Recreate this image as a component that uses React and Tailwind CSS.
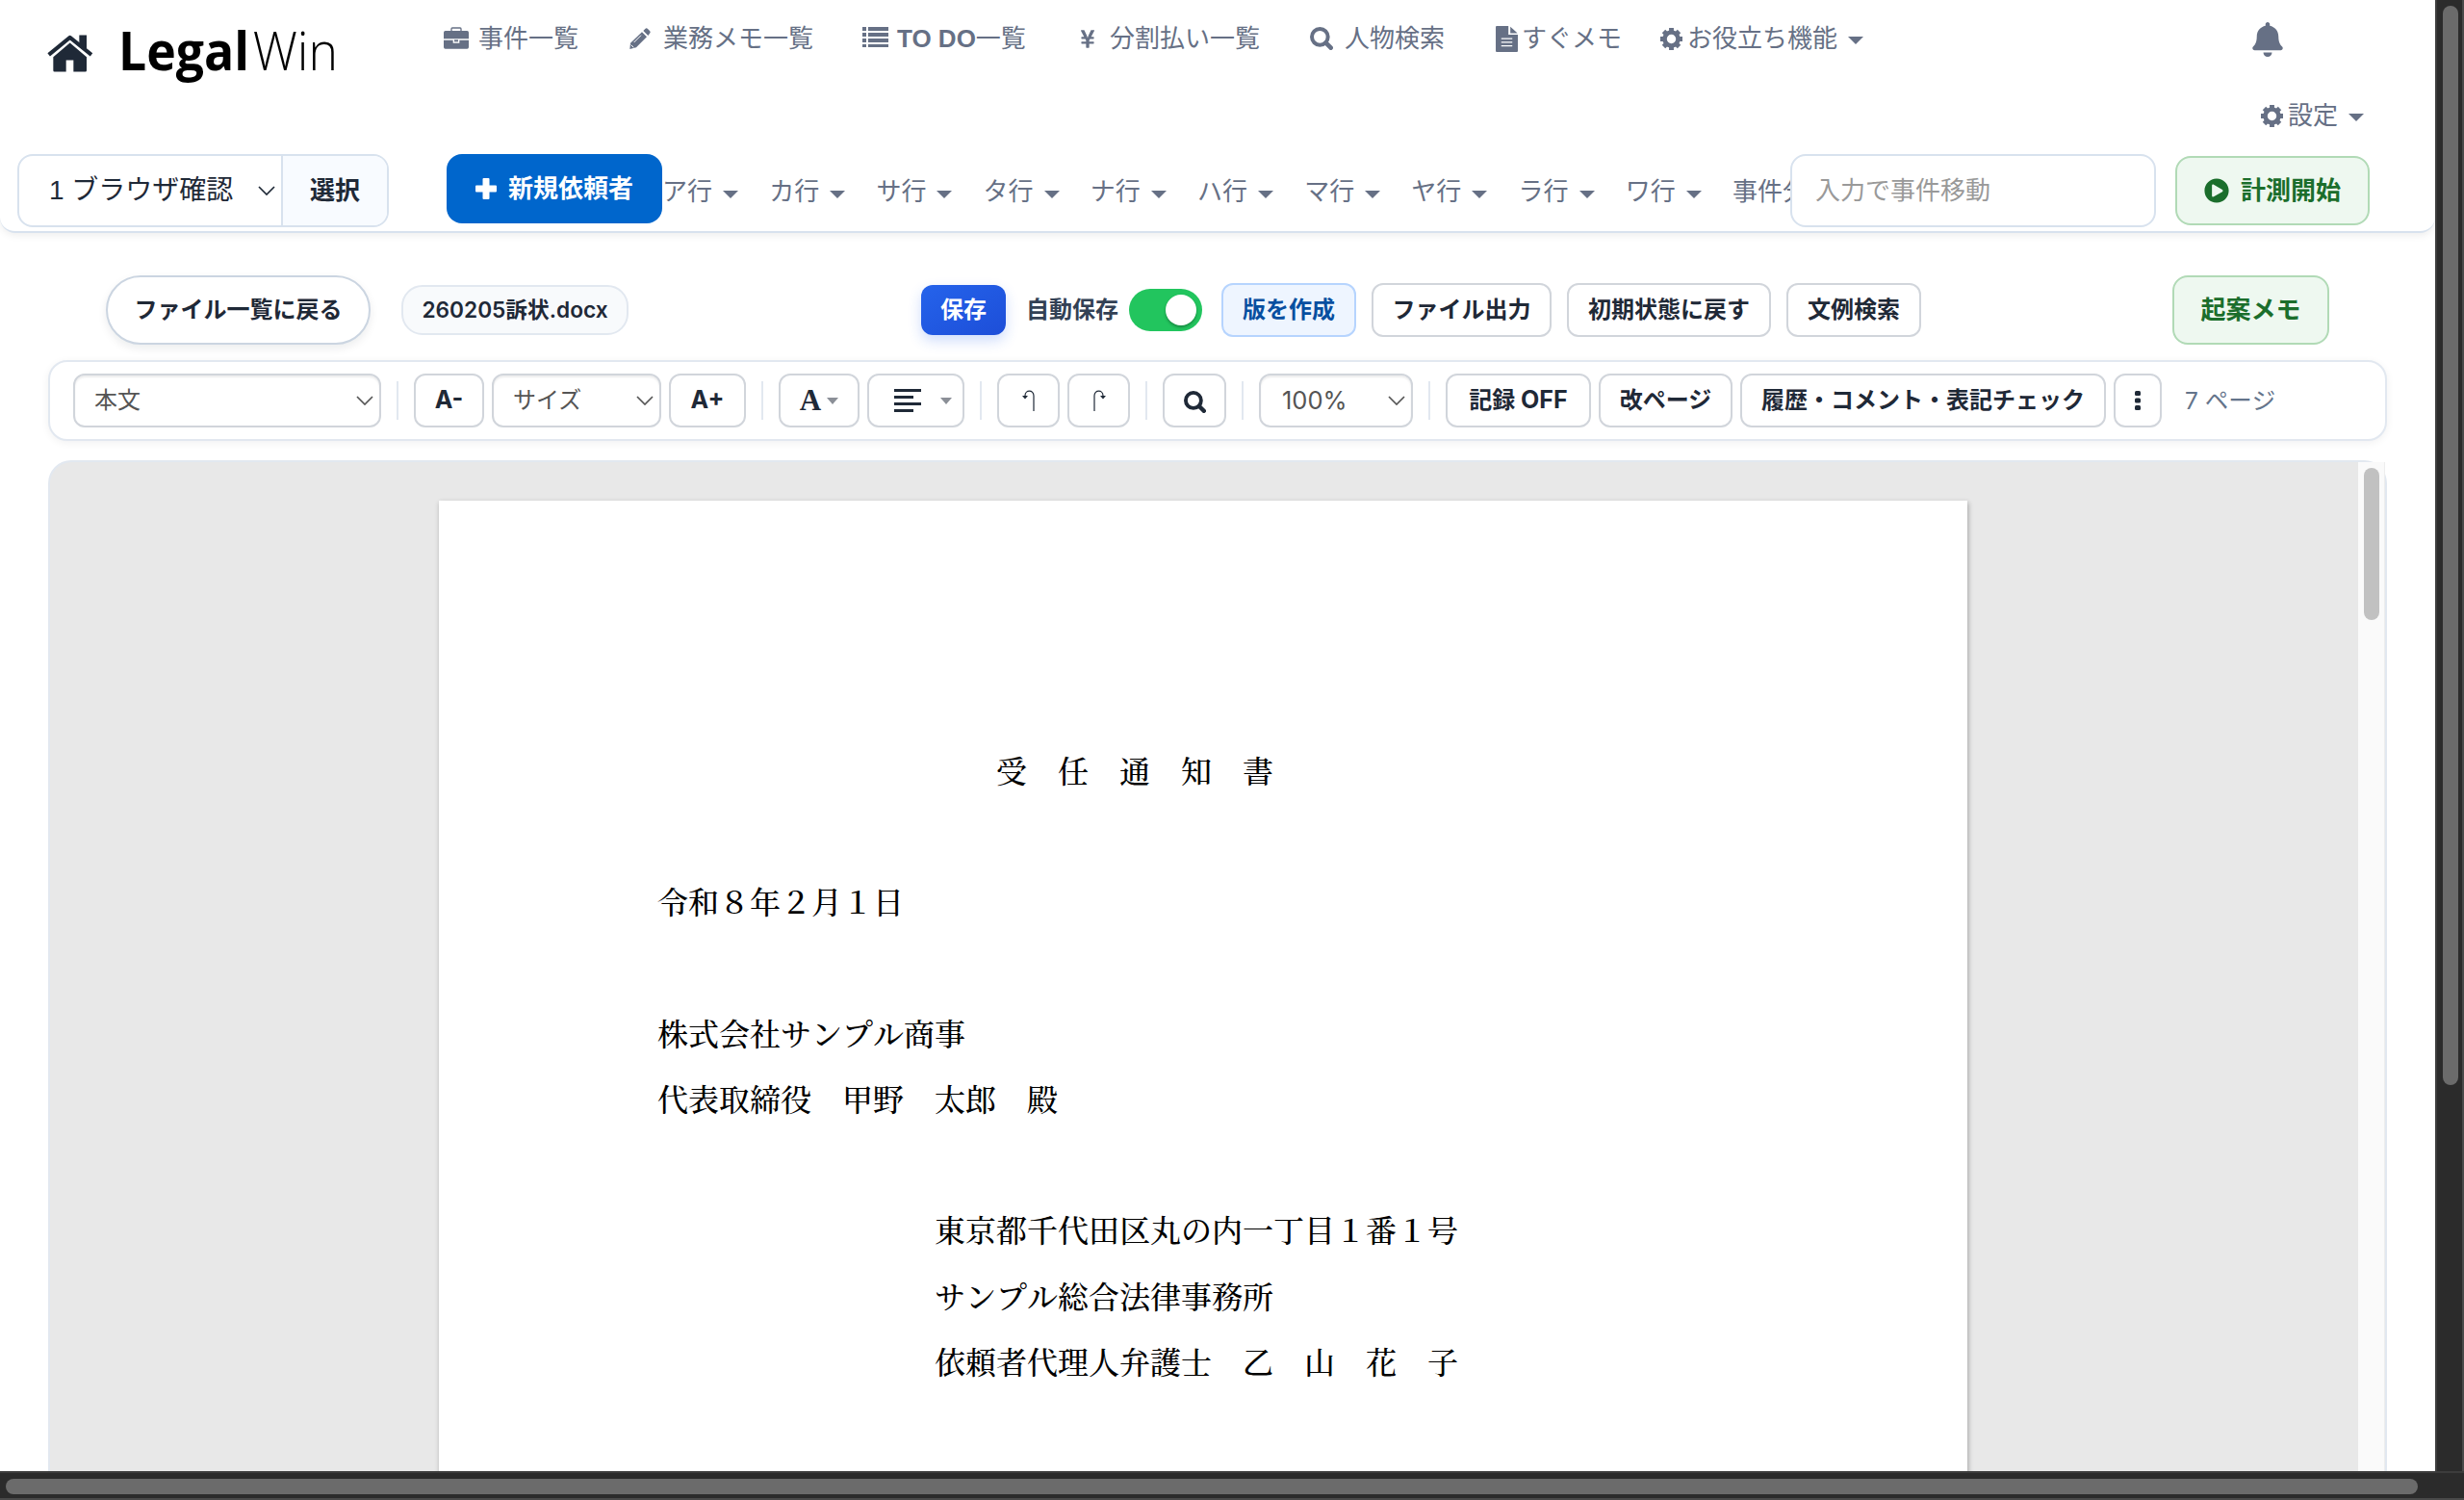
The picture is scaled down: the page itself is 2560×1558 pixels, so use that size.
import { FaBell, FaPlayCircle, FaYenSign } from 'react-icons/fa';

const kanaRows = ['ア行', 'カ行', 'サ行', 'タ行', 'ナ行', 'ハ行', 'マ行', 'ヤ行', 'ラ行', 'ワ行'];

const documentLines = [
    '　　　　　　　　　　　受　任　通　知　書',
    '',
    '令和８年２月１日',
    '',
    '株式会社サンプル商事',
    '代表取締役　甲野　太郎　殿',
    '',
    '　　　　　　　　　東京都千代田区丸の内一丁目１番１号',
    '　　　　　　　　　サンプル総合法律事務所',
    '　　　　　　　　　依頼者代理人弁護士　乙　山　花　子',
];

const HomeIcon = ({ className }) => (
    <svg viewBox="0 0 144 116" className={className} fill="currentColor">
        <path d="M5 62L71 8l67 54" fill="none" stroke="currentColor" strokeWidth="12" strokeLinejoin="round" />
        <path d="M100 1h23v46L100 28z" />
        <path d="M19 69l52-44 52 44v42q0 4-4 4H82V79H59v36H23q-4 0-4-4z" />
    </svg>
);

const BriefcaseIcon = ({ className }) => (
    <svg viewBox="0 0 78 67" className={className} fill="currentColor">
        <path d="M24 12V5q0-3 3-3h24q3 0 3 3v7" fill="none" stroke="currentColor" strokeWidth="4" />
        <path d="M5 11h68q5 0 5 5v20H0V16q0-5 5-5zM0 40h29v9h20v-9h29v22q0 5-5 5H5q-5 0-5-5z" />
        <path d="M33 39h12v6H33z" />
    </svg>
);

const PencilIcon = ({ className }) => (
    <svg viewBox="0 0 66 66" className={className} fill="currentColor">
        <path d="M43 9l6-6q4-4 8 0l6 6q4 4 0 8l-5 7z" />
        <path d="M39 13l15 15-33 33-20 5 2-19z" />
        <path d="M36 23L14 45M5 53l8 8" fill="none" stroke="white" strokeWidth="3" />
    </svg>
);

const ListIcon = ({ className }) => (
    <svg viewBox="0 0 27 22" className={className} fill="currentColor">
        <path d="M0 0h4v4H0zM6 0h21v4H6zM0 6h4v4H0zM6 6h21v4H6zM0 12h4v4H0zM6 12h21v4H6zM0 18h4v3H0zM6 18h21v3H6z" />
    </svg>
);

const SearchIcon = ({ className }) => (
    <svg viewBox="0 0 72 72" className={className} fill="none" stroke="currentColor">
        <circle cx="31" cy="31" r="25" strokeWidth="12" />
        <path d="M50 50l15 15" strokeWidth="14" strokeLinecap="round" />
    </svg>
);

const FileIcon = ({ className }) => (
    <svg viewBox="0 0 68 80" className={className} fill="currentColor">
        <path
            fillRule="evenodd"
            d="M3 0h36v27h29v50q0 3-3 3H3q-3 0-3-3V3q0-3 3-3zM17 37v4h34v-4zM17 48v4h34v-4zM17 59v4h34v-4z"
        />
        <path d="M45 2l22 20H45z" />
    </svg>
);

const GearIcon = ({ className }) => (
    <svg viewBox="-33 -33 66 66" className={className} fill="none" stroke="currentColor">
        <circle r="20" strokeWidth="13" />
        <path
            d="M0-33V-22M0 33V22M-33 0H-22M33 0H22M-23-23l8 8M23 23l-8-8M23-23l-8 8M-23 23l8-8"
            strokeWidth="14"
        />
    </svg>
);

const PlusIcon = ({ className }) => (
    <svg viewBox="0 0 22 22" className={className} fill="currentColor">
        <path d="M8.500 0h5q1 0 1 1v6.500h6.500q1 0 1 1v5q0 1-1 1h-6.500V21q0 1-1 1h-5q-1 0-1-1v-6.500H1q-1 0-1-1v-5q0-1 1-1h6.500V1q0-1 1-1z" />
    </svg>
);

const Caret = ({ className = 'w-4 h-2' }) => (
    <svg viewBox="0 0 16 8" preserveAspectRatio="none" className={`shrink-0 ${className}`} fill="currentColor">
        <path d="M0 0h16L8 8z" />
    </svg>
);

const Chevron = () => (
    <svg viewBox="0 0 18 10" className="w-[18px] h-[10px] shrink-0" fill="none" stroke="currentColor" strokeWidth="1.7">
        <path d="M1 1l8 8 8-8" />
    </svg>
);

const NavItem = ({ icon, label, className = '' }) => (
    <a className={`flex items-center shrink-0 ${className}`}>
        {icon}
        <span>{label}</span>
    </a>
);

const Separator = () => <div className="w-0.5 h-10 mx-2 bg-[#e2e8f0] shrink-0" />;

const ToolButton = ({ children, className = '', tone = 'border-[#d1d5db] bg-white text-[#1f2937]' }) => (
    <button
        className={`h-14 shrink-0 flex items-center justify-center rounded-xl border-2 font-bold text-2xl ${tone} ${className}`}
    >
        {children}
    </button>
);

const ToolSelect = ({ label, className = '' }) => (
    <div
        className={`h-14 shrink-0 flex items-center justify-between rounded-xl border-2 border-[#d1d5db] bg-white text-2xl text-[#555] pl-5 pr-1.5 shadow-[inset_0_2px_2px_rgba(0,0,0,0.07)] ${className}`}
    >
        {label}
        <Chevron />
    </div>
);

const Header = () => (
    <header className="h-[242px] shrink-0 bg-white border-b-2 border-[#d8e2ee] rounded-b-2xl shadow-[0_2px_8px_rgba(0,0,0,0.08)] text-[26px] leading-none text-[#667085]">
        <div className="flex h-20">
            <div className="w-[461px] shrink-0 flex items-start pl-[49px] pt-5 text-[#1f2937]">
                <HomeIcon className="w-12 h-[39px] mt-4 shrink-0" />
                <div className="ml-[26px] flex h-[62px] items-center text-black text-[55px] font-['Open_Sans'] origin-left scale-x-[0.94]">
                    <span className="font-bold">Legal</span>
                    <span className="font-light ml-1">Win</span>
                </div>
            </div>
            <nav className="flex items-center w-[1879px] shrink-0">
                <NavItem
                    className="w-[192px]"
                    icon={<BriefcaseIcon className="mr-2.5 mb-0.5 w-[26px] h-[23px]" />}
                    label="事件一覧"
                />
                <NavItem
                    className="w-[243px]"
                    icon={<PencilIcon className="ml-px mr-[13px] w-[22px] h-[22px]" />}
                    label="業務メモ一覧"
                />
                <NavItem
                    className="w-[226px]"
                    icon={<ListIcon className="mr-[9px] mb-0.5 w-[27px] h-[22px]" />}
                    label={
                        <>
                            <b>TO DO</b>一覧
                        </>
                    }
                />
                <NavItem
                    className="w-[239px]"
                    icon={<FaYenSign className="mr-[15px] w-4 h-[21px]" />}
                    label="分割払い一覧"
                />
                <NavItem className="w-[193px]" icon={<SearchIcon className="mr-3 w-6 h-6" />} label="人物検索" />
                <NavItem className="w-[170px]" icon={<FileIcon className="mr-1 w-[23px] h-[27px]" />} label="すぐメモ" />
                <NavItem icon={<GearIcon className="ml-px mr-[5px] w-[23px] h-[23px]" />} label="お役立ち機能" />
                <Caret className="w-4 h-2 ml-[11px] mt-1" />
            </nav>
            <FaBell className="w-[32px] h-[36px] mt-[23px]" />
        </div>
        <div className="flex h-20 items-center justify-end pr-[74px]">
            <GearIcon className="w-[23px] h-[23px] mr-[5px]" />
            設定
            <Caret className="w-4 h-2 ml-[11px] mt-1" />
        </div>
        <div className="flex items-start h-[76px]">
            <div className="ml-[18px] w-[386px] h-[76px] shrink-0 flex rounded-2xl border-2 border-[#d8e2ee] overflow-hidden text-[#1f2937]">
                <div className="w-[274px] flex items-center justify-between pl-[31px] pr-1.5 text-[28px] border-r-2 border-[#d8e2ee] [font-kerning:none]">
                    <span>1 ブラウザ確認</span>
                    <Chevron />
                </div>
                <div className="flex-1 flex items-center justify-center bg-[#f8fbff] font-bold">選択</div>
            </div>
            <button className="ml-[60px] w-[224px] h-[72px] shrink-0 flex items-center justify-center gap-3 rounded-2xl bg-[#0066cc] text-white font-bold">
                <PlusIcon className="w-[22px] h-[22px]" />
                新規依頼者
            </button>
            <div className="flex w-[1172px] shrink-0 h-[78px] items-center overflow-hidden whitespace-nowrap">
                {kanaRows.map((row) => (
                    <div key={row} className="w-[111.2px] shrink-0 flex items-center">
                        {row}
                        <Caret className="w-4 h-2 ml-[11px] mt-1.5" />
                    </div>
                ))}
                <span>事件分</span>
            </div>
            <div className="w-[380px] h-[76px] shrink-0 flex items-center rounded-2xl border-2 border-[#d8e2ee] bg-white pl-6 text-[#999]">
                入力で事件移動
            </div>
            <button className="ml-5 mt-0.5 w-[202px] h-[72px] shrink-0 flex items-center justify-center gap-3 rounded-2xl border-2 border-[#b1dab6] bg-[#eef8f0] text-[#1b6e2c] font-bold">
                <FaPlayCircle className="w-[26px] h-[26px]" />
                計測開始
            </button>
        </div>
    </header>
);

const ActionBar = () => (
    <div className="flex items-center h-[72px] mt-11 shrink-0 text-2xl leading-none text-[#1f2937] font-bold">
        <button className="ml-[110px] w-[275px] h-[72px] shrink-0 rounded-full border-2 border-[#cbd5e1] bg-white shadow-[0_4px_10px_rgba(15,23,42,0.08)]">
            ファイル一覧に戻る
        </button>
        <div className="ml-8 w-[236px] h-[52px] shrink-0 flex items-center justify-center rounded-[22px] border-2 border-[#e2e8f0] bg-[#f8fafc] text-[22.700px] font-semibold font-['Inter','Noto_Sans_CJK_JP',sans-serif]">
            260205訴状.docx
        </div>
        <button className="ml-[304px] w-[88px] h-[52px] shrink-0 rounded-xl bg-linear-to-br from-[#2563eb] to-[#1d4ed8] text-white shadow-[0_6px_14px_rgba(37,99,235,0.22)]">
            保存
        </button>
        <span className="ml-[21px] text-[#334155]">自動保存</span>
        <div className="ml-[11px] w-[76px] h-11 shrink-0 flex items-center justify-end rounded-full bg-[#22c55e] pr-1.5">
            <div className="w-8 h-8 rounded-full bg-white shadow-[0_2px_3px_rgba(0,0,0,0.3)]" />
        </div>
        <ToolButton className="ml-5 w-[140px]" tone="border-[#b6d4fe] bg-[#eef5ff] text-[#084fa0]">
            版を作成
        </ToolButton>
        <ToolButton className="ml-4 w-[187px]">ファイル出力</ToolButton>
        <ToolButton className="ml-4 w-[212px]">初期状態に戻す</ToolButton>
        <ToolButton className="ml-4 w-[140px]">文例検索</ToolButton>
        <button className="ml-[261px] w-[163px] h-[72px] shrink-0 rounded-2xl border-2 border-[#b1dab6] bg-[#eef8f0] text-[26px] text-[#1b6e2c]">
            起案メモ
        </button>
    </div>
);

const Toolbar = () => (
    <div className="mt-4 ml-[50px] w-[2430px] h-[84px] shrink-0 flex items-center gap-2 rounded-[20px] border-2 border-[#e2e8f0] bg-white pl-6 leading-none shadow-[0_2px_8px_rgba(15,23,42,0.06)] font-['Inter','Noto_Sans_CJK_JP',sans-serif]">
        <ToolSelect label="本文" className="w-80" />
        <Separator />
        <ToolButton className="w-[73px]">
            <span className="text-[25px]">A-</span>
        </ToolButton>
        <ToolSelect label="サイズ" className="w-44" />
        <ToolButton className="w-20">
            <span className="text-[25px]">A+</span>
        </ToolButton>
        <Separator />
        <ToolButton className="w-[84px] gap-1.5">
            <span className="font-['Liberation_Serif'] text-[31px]">A</span>
            <Caret className="w-3 h-[7px] text-[#8b8f97]" />
        </ToolButton>
        <ToolButton className="w-[101px] gap-5 pl-3.5">
            <svg viewBox="0 0 28 24" className="w-7 h-6" fill="currentColor">
                <path d="M0 0h28v3H0zM0 7h20v3H0zM0 14h28v3H0zM0 21h20v3H0z" />
            </svg>
            <Caret className="w-3 h-[7px] text-[#8b8f97]" />
        </ToolButton>
        <Separator />
        <ToolButton className="w-[65px]">
            <svg viewBox="0 0 14 22" className="w-[14px] h-[22px]" fill="none" stroke="currentColor" strokeWidth="1.2">
                <path d="M12 22V6C12 -0.500 3 -0.500 3 6" />
                <path d="M0 6h6L3 9.500z" fill="currentColor" stroke="none" />
            </svg>
        </ToolButton>
        <ToolButton className="w-[65px]">
            <svg viewBox="0 0 14 22" className="w-[14px] h-[22px]" fill="none" stroke="currentColor" strokeWidth="1.2">
                <path d="M2 22V6C2 -0.500 11 -0.500 11 6" />
                <path d="M8 6h6L11 9.500z" fill="currentColor" stroke="none" />
            </svg>
        </ToolButton>
        <Separator />
        <ToolButton className="w-[66px]">
            <SearchIcon className="w-[23px] h-[23px] mt-0.5" />
        </ToolButton>
        <Separator />
        <ToolSelect label={<span className="ml-0.5 text-[25.500px]">100%</span>} className="w-40" />
        <Separator />
        <ToolButton className="w-[151px]">
            <span>
                記録 <span className="text-[25px]">OFF</span>
            </span>
        </ToolButton>
        <ToolButton className="w-[139px]">改ページ</ToolButton>
        <ToolButton className="w-[380px]">履歴・コメント・表記チェック</ToolButton>
        <ToolButton className="w-[50px]">
            <svg viewBox="0 0 6 20" className="w-1.5 h-5" fill="currentColor">
                <rect width="6" height="5" rx="1.5" />
                <rect y="7.500" width="6" height="5" rx="1.5" />
                <rect y="15" width="6" height="5" rx="1.5" />
            </svg>
        </ToolButton>
        <span className="ml-4 text-[24.500px] text-[#64748b] [font-kerning:none]">7 ページ</span>
    </div>
);

const Editor = () => (
    <div className="mt-5 ml-[50px] w-[2430px] flex-1 min-h-0 flex rounded-t-3xl border-2 border-b-0 border-[#e2e8f0] bg-[#e8e8e8]">
        <div className="flex-1 overflow-hidden">
            <div className="mt-10 ml-[404px] w-[1588px] h-[1100px] bg-white pt-[245px] pl-[227px] shadow-[1px_2px_5px_rgba(0,0,0,0.3)]">
                {documentLines.map((line, index) => (
                    <p
                        key={index}
                        className="h-[68.2px] text-[32px] leading-[68.2px] whitespace-pre text-black font-medium [font-kerning:none] font-['Noto_Serif_CJK_JP','Noto_Sans_CJK_JP',serif]"
                    >
                        {line}
                    </p>
                ))}
            </div>
        </div>
        <div className="w-7 shrink-0 bg-[#fafafa] border-r border-[#ededed]">
            <div className="mt-1.5 ml-1.5 w-4 h-[158px] rounded-full bg-[#c1c1c1]" />
        </div>
    </div>
);

export default function App() {
    return (
        <div className="w-[2560px] h-[1558px] overflow-hidden flex flex-col bg-[#2b2b2b] font-['Liberation_Sans','Noto_Sans_CJK_JP',sans-serif]">
            <div className="flex h-[1528px] shrink-0">
                <main className="w-[2530px] h-[1528px] flex flex-col bg-white overflow-hidden">
                    <Header />
                    <ActionBar />
                    <Toolbar />
                    <Editor />
                </main>
                <div className="w-[30px] border-l-2 border-l-[#3c3c3c] border-r-2 border-r-[#4a4a4a] pt-1.5 pl-1.5">
                    <div className="w-4 h-[1121px] rounded-full bg-[#6b6b6b]" />
                </div>
            </div>
            <div className="h-[30px] shrink-0 flex border-t-2 border-t-[#3c3c3c] border-b-2 border-b-[#4a4a4a] pt-1.5 pl-1.5">
                <div className="w-[2506px] h-4 rounded-full bg-[#6b6b6b]" />
            </div>
        </div>
    );
}
